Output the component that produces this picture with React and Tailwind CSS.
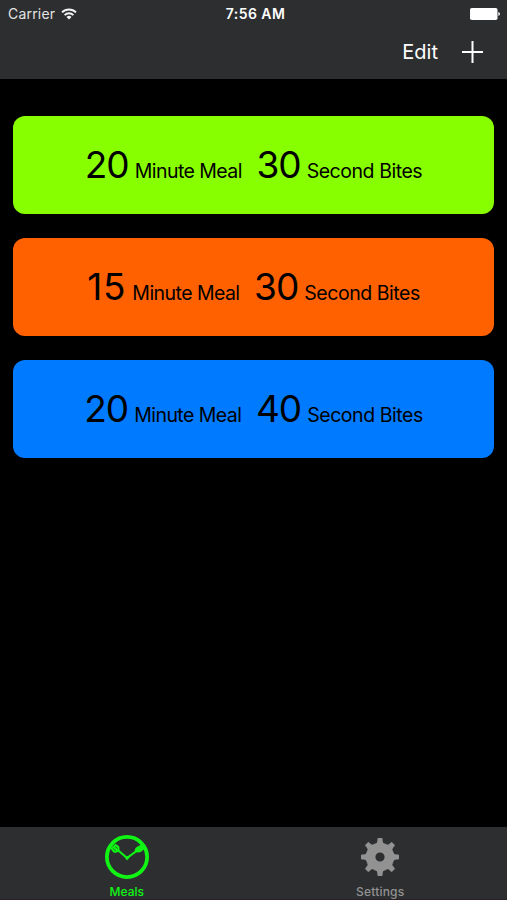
import { useState } from 'react';

const meals = [
  { id: 1, minutes: 20, seconds: 30, color: 'bg-[#88ff00]', tracking: 'tracking-[-1px]' },
  { id: 2, minutes: 15, seconds: 30, color: 'bg-[#ff6000]', tracking: 'tracking-[0.8px]' },
  { id: 3, minutes: 20, seconds: 40, color: 'bg-[#007aff]', tracking: 'tracking-[-1px]' },
];

function WifiIcon() {
  return (
    <svg width="16" height="12" viewBox="0 0 16 12" fill="none" stroke="#f4f4f4" strokeWidth="1.9">
      <path d="M1 4.4a10 10 0 0 1 14 0" />
      <path d="M3.6 7.1a6.2 6.2 0 0 1 8.8 0" />
      <path d="M8 11.6 5.5 9.1a3.5 3.5 0 0 1 5 0z" fill="#f4f4f4" stroke="none" />
    </svg>
  );
}

function BatteryIcon() {
  return (
    <svg width="30" height="12" viewBox="0 0 30 12" fill="#fff">
      <rect x="0" y="0" width="27.5" height="12" rx="1.8" />
      <path d="M28.3 4.1c1 .3 1.6 1 1.6 1.9s-.6 1.6-1.6 1.9z" />
    </svg>
  );
}

function ClockIcon() {
  return (
    <svg width="44" height="44" viewBox="0 0 44 44" fill="none" stroke="currentColor">
      <circle cx="22" cy="22" r="20.1" strokeWidth="3.8" />
      <path d="M11 13.5 22 23 34 14.2" strokeWidth="2.1" />
      <path d="M17.500 19 22 25.600 27 19.300 22 21.500z" fill="currentColor" stroke="none" />
      {/* fork */}
      <path d="M5.500 13.500 10.500 8.800 14 11.200Q15.400 14.500 13.500 16.500 11 18.600 8.200 17.200z" fill="currentColor" stroke="none" />
      <path d="m7.800 13.400 3 2.400M10 11.300l3 2.400" stroke="#2d2e30" strokeWidth=".6" />
      {/* spoon */}
      <path d="M30 16.800Q29 13.400 32.500 11.600L37 9.200 39.500 14Q36 17.800 32.500 17.600 30.600 17.600 30 16.800z" fill="currentColor" stroke="none" />
    </svg>
  );
}

function GearIcon() {
  return (
    <svg width="38" height="38" viewBox="-19 -19 38 38" fill="currentColor">
      <circle r="11" fill="none" stroke="currentColor" strokeWidth="6.5" />
      <circle r="6.8" fill="none" stroke="currentColor" strokeWidth="4.4" />
      {[0, 45, 90, 135, 180, 225, 270, 315].map((angle) => (
        <path
          key={angle}
          transform={`rotate(${angle})`}
          d="M-4.8-12.5Q-2.6-14-2.6-16.5V-18Q-2.6-19-1.6-19H1.6Q2.6-19 2.6-18V-16.5Q2.6-14 4.8-12.5z"
        />
      ))}
    </svg>
  );
}

function MealCard({ meal }) {
  return (
    <li className={`flex h-[98px] items-baseline justify-center rounded-[12px] pt-[26px] text-black ${meal.color}`}>
      <span className={`text-[37px] leading-[45px] ${meal.tracking}`}>{meal.minutes}</span>
      <span className="ml-[6px] text-[19.5px] tracking-[-0.55px]">Minute Meal</span>
      <span className="ml-[14.5px] text-[37px] leading-[45px] tracking-[-1px]">{meal.seconds}</span>
      <span className="ml-[6px] text-[19.5px] tracking-[-0.45px]">Second Bites</span>
    </li>
  );
}

export default function App() {
  const [tab, setTab] = useState('meals');

  return (
    <div className="flex h-screen w-full flex-col overflow-hidden bg-black font-['Inter','Liberation_Sans',sans-serif] text-white">
      <header className="h-[79px] bg-[#2d2e30]">
        <div className="grid h-[27px] grid-cols-3 items-center pl-[8px] pr-[7px]">
          <div className="flex items-center gap-[6px] text-[14px] tracking-[0.2px] text-[#e4e4e4]">
            <span>Carrier</span>
            <WifiIcon />
          </div>
          <div className="pl-[3px] text-center text-[14px] font-semibold tracking-[0.45px]">7:56 AM</div>
          <div className="flex justify-end">
            <BatteryIcon />
          </div>
        </div>
        <div className="flex h-[50px] items-center justify-end gap-[24px] pr-[24px]">
          <button className="text-[20px]">Edit</button>
          <button aria-label="Add meal">
            <svg width="21" height="22" viewBox="0 0 21 22" stroke="#fff" strokeWidth="2">
              <path d="M10.5 0v22M0 11h21" />
            </svg>
          </button>
        </div>
      </header>

      <main className="flex-1 px-[13px] pt-[37px]">
        <ul className="flex flex-col gap-6">
          {meals.map((meal) => (
            <MealCard key={meal.id} meal={meal} />
          ))}
        </ul>
      </main>

      <nav className="grid h-[73px] grid-cols-2 border-b border-[#2c2028] bg-[#2d2e30] text-[12px] font-medium">
        <button
          onClick={() => setTab('meals')}
          className={`flex flex-col items-center pt-[8px] ${tab === 'meals' ? 'text-[#10f514]' : 'text-[#929292]'}`}
        >
          <ClockIcon />
          <span className="mt-[5px] leading-[16px]">Meals</span>
        </button>
        <button
          onClick={() => setTab('settings')}
          className={`flex flex-col items-center pt-[11px] ${tab === 'settings' ? 'text-[#10f514]' : 'text-[#929292]'}`}
        >
          <GearIcon />
          <span className="mt-[8px] leading-[16px] tracking-[0.2px]">Settings</span>
        </button>
      </nav>
    </div>
  );
}
